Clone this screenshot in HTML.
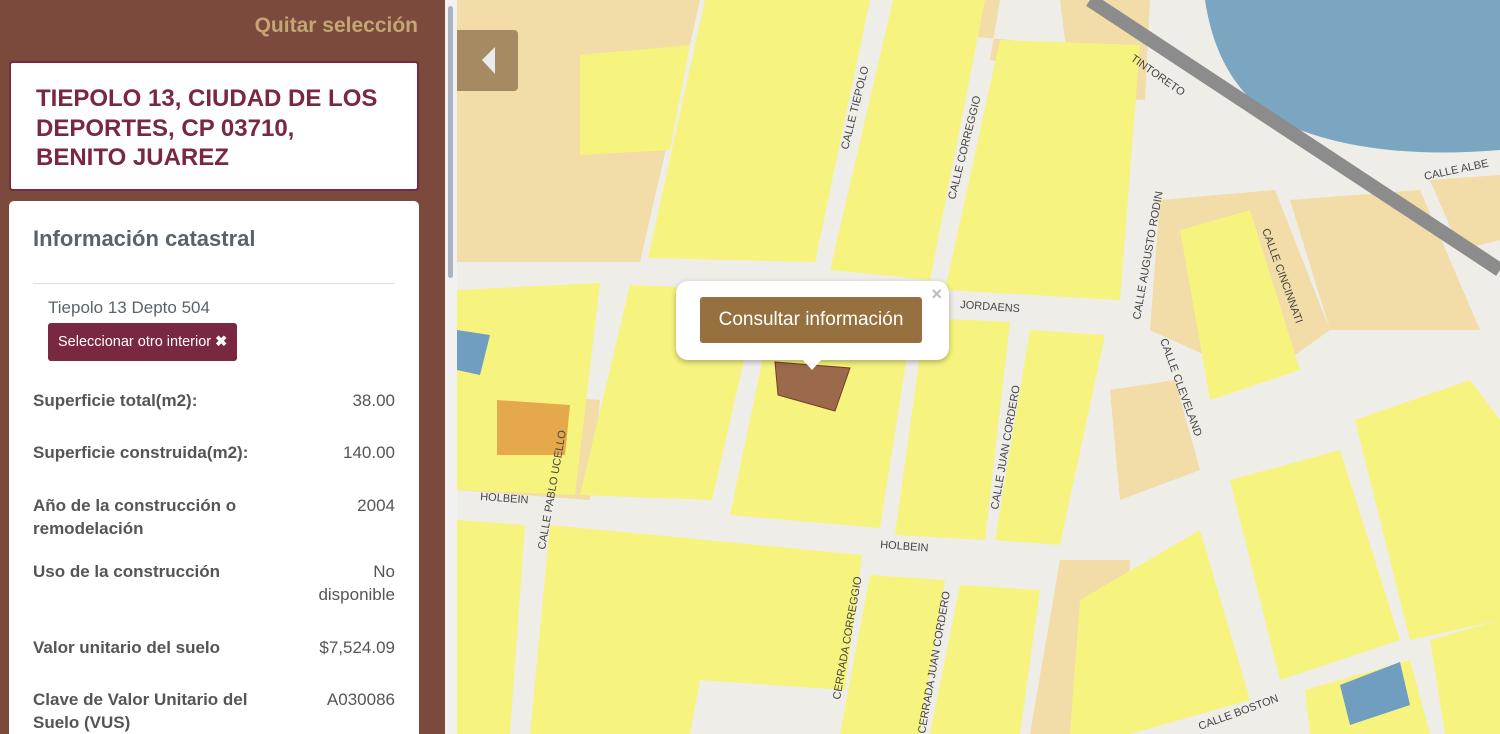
<!DOCTYPE html>
<html><head><meta charset="utf-8"><style>
*{margin:0;padding:0;box-sizing:border-box}
html,body{width:1500px;height:734px;overflow:hidden}
body{position:relative;font-family:"Liberation Sans",sans-serif;background:#eeece6}
#map{position:absolute;left:457px;top:0;width:1043px;height:734px}
#left{position:absolute;left:0;top:0;width:445px;height:734px;background:#7b4a3c;overflow:hidden}
#sb{position:absolute;left:445px;top:0;width:12px;height:734px;background:#f1f1f1}
#sb div{position:absolute;left:3px;top:6px;width:5px;height:272px;background:#a9b3c2;border-radius:3px}
.quit{position:absolute;right:27px;top:14px;color:#c4a574;font-weight:bold;font-size:21px}
.addr{position:absolute;left:9px;top:61px;width:410px;height:130px;background:#fff;border:2px solid #7a2740;border-radius:4px;padding:21px 30px 20px 25px;color:#7a2740;font-weight:bold;font-size:24px;line-height:29.5px}
.info{position:absolute;left:9px;top:201px;width:410px;height:560px;background:#fff;border-radius:5px;padding:25px 24px}
.info h2{font-size:22px;color:#5a6468;font-weight:bold;margin-bottom:31px}
.info hr{border:0;border-top:1px solid #ddd;margin-bottom:14px}
.sub{color:#5a6468;font-size:17px;margin-left:15px}
.btn{display:inline-block;margin:5px 0 0 15px;background:#7a2740;color:#fff;font-size:14.5px;padding:11px 10px;border-radius:3px}
.row{display:flex;justify-content:space-between;color:#555;font-size:17px;line-height:23px;position:absolute;left:24px;width:362px}
.row b{width:240px}
.row span{text-align:right;color:#555}
.tog{position:absolute;left:457px;top:30px;width:61px;height:61px;background:#a68a62;border-radius:0 4px 4px 0}
.pop{position:absolute;left:676px;top:281px;width:273px;height:79px;background:#fff;border-radius:12px;box-shadow:0 2px 6px rgba(0,0,0,.3)}
.pop .b{position:absolute;left:24px;top:16px;width:222px;height:46px;background:#977040;border-radius:3px;color:#fff;font-size:19px;text-align:center;line-height:46px}
.pop .x{position:absolute;right:7px;top:3px;color:#bbb;font-size:18px;font-weight:bold}
.pop .t{position:absolute;left:126px;top:78px;width:0;height:0;border-left:10px solid transparent;border-right:10px solid transparent;border-top:11px solid #fff}
</style></head><body>
<svg id="map" viewBox="457 0 1043 734" xmlns="http://www.w3.org/2000/svg">
<rect x="457" y="0" width="1043" height="734" fill="#efede8"/>
<g fill="#f2dca8">
<polygon points="457,0 700,0 640,262 457,262"/>
<polygon points="900,0 1000,0 990,60 1070,80 1060,0 1150,0 1145,100 1050,95 1010,40 895,30"/>
<polygon points="1160,200 1275,190 1330,330 1260,380 1150,330"/>
<polygon points="1290,200 1420,190 1480,330 1330,330"/>
<polygon points="1110,390 1175,380 1200,470 1120,500"/>
<polygon points="1060,560 1130,560 1120,734 1030,734"/>
<polygon points="457,390 600,400 590,500 457,490"/>
<polygon points="1430,180 1500,175 1500,240 1460,250"/>
</g>
<g fill="#f6f47e">
<polygon points="580,55 690,45 670,150 580,155"/>
<polygon points="705,0 870,0 815,262 648,258"/>
<polygon points="893,0 985,0 930,280 830,270"/>
<polygon points="1000,40 1140,45 1120,300 945,290"/>
<polygon points="1180,230 1250,210 1300,370 1210,400"/>
<polygon points="630,285 760,290 712,500 580,495"/>
<polygon points="775,300 915,305 880,528 730,515"/>
<polygon points="925,318 1010,322 985,540 895,535"/>
<polygon points="1030,330 1105,335 1060,545 995,540"/>
<polygon points="457,290 600,283 575,495 457,490"/>
<polygon points="457,520 525,525 510,734 457,734"/>
<polygon points="550,525 862,555 845,690 700,680 690,734 530,734"/>
<polygon points="870,575 945,580 920,734 840,734"/>
<polygon points="960,585 1040,590 1020,734 930,734"/>
<polygon points="1080,600 1200,530 1250,700 1130,734 1070,734"/>
<polygon points="1230,480 1340,450 1400,640 1280,680"/>
<polygon points="1355,420 1470,380 1500,420 1500,620 1410,640"/>
<polygon points="1305,690 1410,660 1430,734 1310,734"/>
<polygon points="1430,640 1500,620 1500,734 1445,734"/>
</g>
<polygon points="775,362 850,368 835,411 778,395" fill="#9a6a4a" stroke="#7a3a2a"/>
<polygon points="497,400 570,405 565,455 497,455" fill="#e5a84a"/>
<polygon points="457,330 490,335 480,375 457,370" fill="#6f9ec0"/>
<polygon points="1340,685 1400,662 1410,705 1350,725" fill="#6f9ec0"/>
<path d="M1205,0 L1500,0 L1500,150 Q1380,160 1300,130 Q1220,100 1205,0Z" fill="#7aa6c2"/>
<path d="M1090,0 L1500,270" stroke="#8c8c8c" stroke-width="14" fill="none"/>
<g font-size="11" fill="#444" font-family="Liberation Sans">
<text x="480" y="500" transform="rotate(4 480 500)">HOLBEIN</text>
<text x="880" y="548" transform="rotate(4 880 548)">HOLBEIN</text>
<text x="960" y="308" transform="rotate(4 960 308)">JORDAENS</text>
<text x="1130" y="60" transform="rotate(35 1130 60)">TINTORETO</text>
<text x="1425" y="180" transform="rotate(-12 1425 180)">CALLE ALBE</text>
<text x="848" y="150" transform="rotate(-76 848 150)">CALLE TIEPOLO</text>
<text x="955" y="200" transform="rotate(-76 955 200)">CALLE CORREGGIO</text>
<text x="1140" y="320" transform="rotate(-80 1140 320)">CALLE AUGUSTO RODIN</text>
<text x="1262" y="230" transform="rotate(70 1262 230)">CALLE CINCINNATI</text>
<text x="1160" y="340" transform="rotate(70 1160 340)">CALLE CLEVELAND</text>
<text x="545" y="550" transform="rotate(-80 545 550)">CALLE PABLO UCELLO</text>
<text x="998" y="510" transform="rotate(-80 998 510)">CALLE JUAN CORDERO</text>
<text x="840" y="700" transform="rotate(-80 840 700)">CERRADA CORREGGIO</text>
<text x="925" y="734" transform="rotate(-80 925 734)">CERRADA JUAN CORDERO</text>
<text x="1200" y="730" transform="rotate(-20 1200 730)">CALLE BOSTON</text>
</g>
</svg>
<div id="left">
<div class="quit">Quitar selección</div>
<div class="addr">TIEPOLO 13, CIUDAD DE LOS DEPORTES, CP 03710,<br>BENITO JUAREZ</div>
<div class="info">
<h2>Información catastral</h2>
<hr>
<div class="sub">Tiepolo 13 Depto 504</div>
<div class="btn">Seleccionar otro interior <b>✖</b></div>
<div class="row" style="top:188px"><b>Superficie total(m2):</b><span>38.00</span></div>
<div class="row" style="top:240px"><b>Superficie construida(m2):</b><span>140.00</span></div>
<div class="row" style="top:293px"><b>Año de la construcción o remodelación</b><span>2004</span></div>
<div class="row" style="top:359px"><b>Uso de la construcción</b><span>No<br>disponible</span></div>
<div class="row" style="top:435px"><b>Valor unitario del suelo</b><span>$7,524.09</span></div>
<div class="row" style="top:487px"><b>Clave de Valor Unitario del Suelo (VUS)</b><span>A030086</span></div>
</div>
</div>
<div id="sb"><div></div></div>
<div class="tog"><svg width="61" height="61"><polygon points="38,17 38,44 25,30" fill="#e8ecf0"/></svg></div>
<div class="pop"><div class="b">Consultar información</div><div class="x">×</div><div class="t"></div></div>
</body></html>
